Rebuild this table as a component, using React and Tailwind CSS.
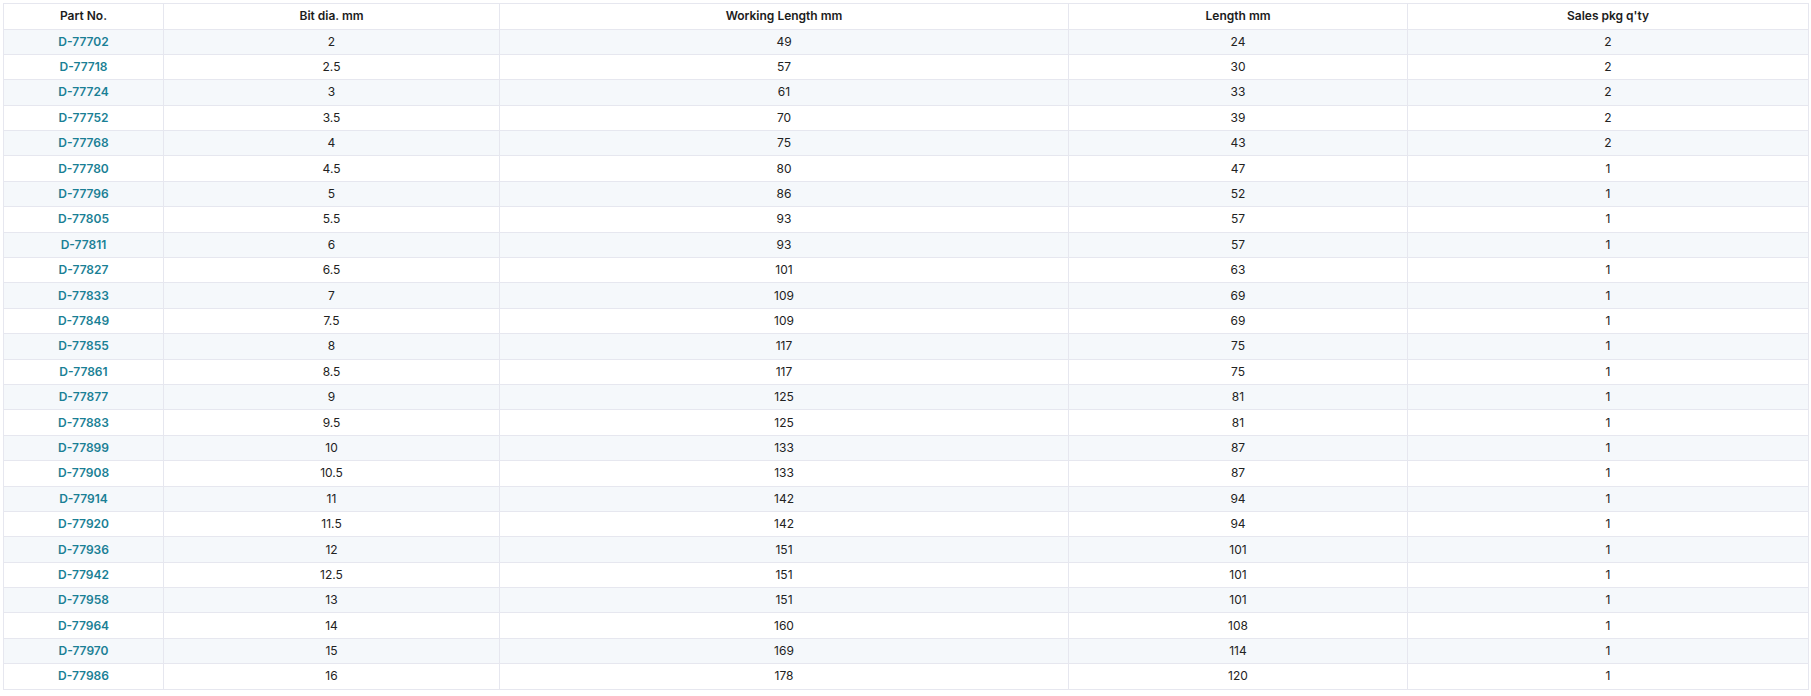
import React from "react";

const rows = [
  ["D-77702", "2", "49", "24", "2"],
  ["D-77718", "2.5", "57", "30", "2"],
  ["D-77724", "3", "61", "33", "2"],
  ["D-77752", "3.5", "70", "39", "2"],
  ["D-77768", "4", "75", "43", "2"],
  ["D-77780", "4.5", "80", "47", "1"],
  ["D-77796", "5", "86", "52", "1"],
  ["D-77805", "5.5", "93", "57", "1"],
  ["D-77811", "6", "93", "57", "1"],
  ["D-77827", "6.5", "101", "63", "1"],
  ["D-77833", "7", "109", "69", "1"],
  ["D-77849", "7.5", "109", "69", "1"],
  ["D-77855", "8", "117", "75", "1"],
  ["D-77861", "8.5", "117", "75", "1"],
  ["D-77877", "9", "125", "81", "1"],
  ["D-77883", "9.5", "125", "81", "1"],
  ["D-77899", "10", "133", "87", "1"],
  ["D-77908", "10.5", "133", "87", "1"],
  ["D-77914", "11", "142", "94", "1"],
  ["D-77920", "11.5", "142", "94", "1"],
  ["D-77936", "12", "151", "101", "1"],
  ["D-77942", "12.5", "151", "101", "1"],
  ["D-77958", "13", "151", "101", "1"],
  ["D-77964", "14", "160", "108", "1"],
  ["D-77970", "15", "169", "114", "1"],
  ["D-77986", "16", "178", "120", "1"],
];

const headers = ["Part No.", "Bit dia. mm", "Working Length mm", "Length mm", "Sales pkg q'ty"];
const widths = ["w-[160px]", "w-[336px]", "w-[569px]", "w-[339px]", "w-[401px]"];

export default function App() {
  return (
    <div className="bg-white p-[3px] font-['Inter','Noto_Sans',sans-serif]">
      <table className="w-full table-fixed border-collapse text-[12px] text-[#222]">
        <colgroup>
          {widths.map((w, i) => (
            <col key={i} className={w} />
          ))}
        </colgroup>
        <thead>
          <tr className="h-[25.5px] bg-white">
            {headers.map((h) => (
              <th key={h} className="border border-[#e6e7ef] font-semibold text-[#1c1c1c] text-center">
                {h}
              </th>
            ))}
          </tr>
        </thead>
        <tbody>
          {rows.map((r, i) => (
            <tr key={r[0]} className={"h-[25.4px] " + (i % 2 === 0 ? "bg-[#f5f8fb]" : "bg-white")}>
              {r.map((c, j) => (
                <td
                  key={j}
                  className={
                    "border border-[#e6e7ef] text-center " +
                    (j === 0 ? "font-semibold text-[#1a7f95]" : "")
                  }
                >
                  {c}
                </td>
              ))}
            </tr>
          ))}
        </tbody>
      </table>
    </div>
  );
}
